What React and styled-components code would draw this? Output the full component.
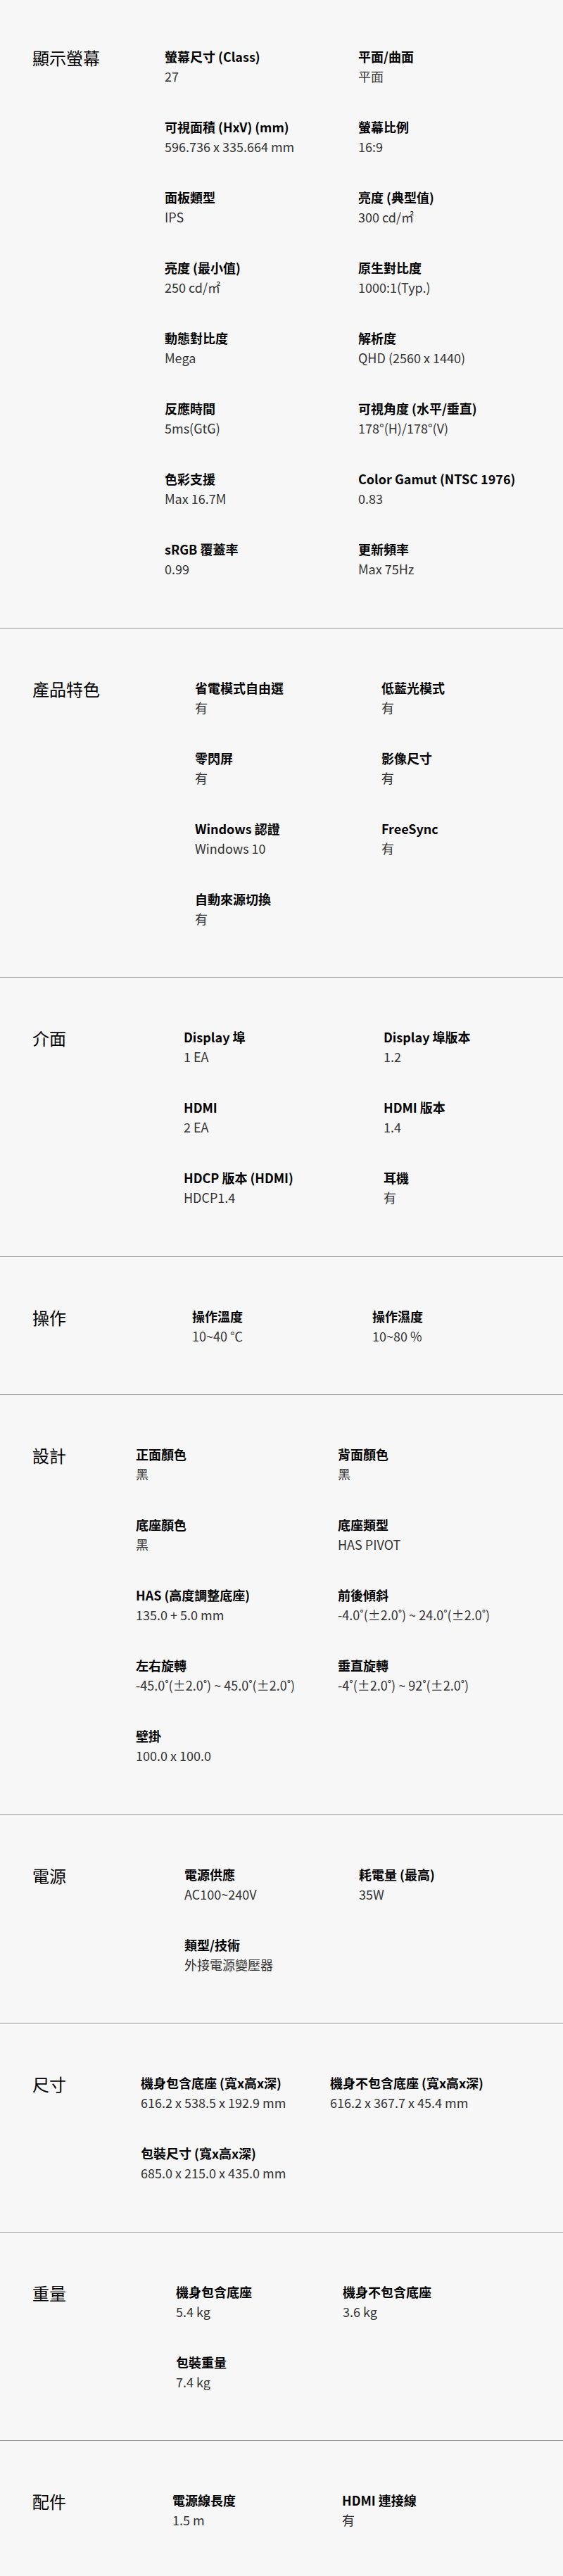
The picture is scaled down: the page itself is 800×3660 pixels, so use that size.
import React from "react";
import styled, { createGlobalStyle } from "styled-components";

const GlobalStyle = createGlobalStyle`
  html, body {
    margin: 0;
    padding: 0;
    background: #f7f7f7;
  }
  body {
    font-family: "Noto Sans CJK TC", "Noto Sans", sans-serif;
    color: #000;
  }
`;

const Page = styled.main`
  width: 800px;
  background: #f7f7f7;
`;

const Section = styled.section`
  display: grid;
  grid-template-columns: ${(p) => p.titleW}px 1fr;
  padding: ${(p) => (p.first ? 68 : 72)}px 0 71.5px 46px;
  border-top: ${(p) => (p.first ? "none" : "1px solid #959595")};
`;

const SectionTitle = styled.h2`
  margin: 0;
  font-size: 24px;
  line-height: 28px;
  font-weight: 400;
  color: #000;
`;

const ItemGrid = styled.dl`
  margin: 0;
  display: grid;
  grid-template-columns: ${(p) => p.colW}px 1fr;
  row-gap: 48px;
  align-content: start;
`;

const Item = styled.div`
  display: flex;
  flex-direction: column;
  gap: 4px;
`;

const Label = styled.dt`
  margin: 0;
  font-size: 18px;
  line-height: 24px;
  font-weight: 700;
  color: #000;
  white-space: nowrap;
`;

const Value = styled.dd`
  margin: 0;
  font-size: 18px;
  line-height: 24px;
  font-weight: 400;
  color: #333;
  white-space: nowrap;
`;

const specs = [
  {
    title: "顯示螢幕",
    titleW: 188,
    colW: 275,
    items: [
      ["螢幕尺寸 (Class)", "27"],
      ["平面/曲面", "平面"],
      ["可視面積 (HxV) (mm)", "596.736 x 335.664 mm"],
      ["螢幕比例", "16:9"],
      ["面板類型", "IPS"],
      ["亮度 (典型值)", "300 cd/㎡"],
      ["亮度 (最小值)", "250 cd/㎡"],
      ["原生對比度", "1000:1(Typ.)"],
      ["動態對比度", "Mega"],
      ["解析度", "QHD (2560 x 1440)"],
      ["反應時間", "5ms(GtG)"],
      ["可視角度 (水平/垂直)", "178°(H)/178°(V)"],
      ["色彩支援", "Max 16.7M"],
      ["Color Gamut (NTSC 1976)", "0.83"],
      ["sRGB 覆蓋率", "0.99"],
      ["更新頻率", "Max 75Hz"],
    ],
  },
  {
    title: "產品特色",
    titleW: 231,
    colW: 265,
    items: [
      ["省電模式自由選", "有"],
      ["低藍光模式", "有"],
      ["零閃屏", "有"],
      ["影像尺寸", "有"],
      ["Windows 認證", "Windows 10"],
      ["FreeSync", "有"],
      ["自動來源切換", "有"],
    ],
  },
  {
    title: "介面",
    titleW: 215,
    colW: 284,
    items: [
      ["Display 埠", "1 EA"],
      ["Display 埠版本", "1.2"],
      ["HDMI", "2 EA"],
      ["HDMI 版本", "1.4"],
      ["HDCP 版本 (HDMI)", "HDCP1.4"],
      ["耳機", "有"],
    ],
  },
  {
    title: "操作",
    titleW: 227,
    colW: 256,
    items: [
      ["操作溫度", "10~40 ℃"],
      ["操作濕度", "10~80 %"],
    ],
  },
  {
    title: "設計",
    titleW: 147,
    colW: 287,
    items: [
      ["正面顏色", "黑"],
      ["背面顏色", "黑"],
      ["底座顏色", "黑"],
      ["底座類型", "HAS PIVOT"],
      ["HAS (高度調整底座)", "135.0 + 5.0 mm"],
      ["前後傾斜", "-4.0˚(±2.0˚) ~ 24.0˚(±2.0˚)"],
      ["左右旋轉", "-45.0˚(±2.0˚) ~ 45.0˚(±2.0˚)"],
      ["垂直旋轉", "-4˚(±2.0˚) ~ 92˚(±2.0˚)"],
      ["壁掛", "100.0 x 100.0"],
    ],
  },
  {
    title: "電源",
    titleW: 216,
    colW: 248,
    items: [
      ["電源供應", "AC100~240V"],
      ["耗電量 (最高)", "35W"],
      ["類型/技術", "外接電源變壓器"],
    ],
  },
  {
    title: "尺寸",
    titleW: 154,
    colW: 269,
    items: [
      ["機身包含底座 (寬x高x深)", "616.2 x 538.5 x 192.9 mm"],
      ["機身不包含底座 (寬x高x深)", "616.2 x 367.7 x 45.4 mm"],
      ["包裝尺寸 (寬x高x深)", "685.0 x 215.0 x 435.0 mm"],
    ],
  },
  {
    title: "重量",
    titleW: 204,
    colW: 237,
    items: [
      ["機身包含底座", "5.4 kg"],
      ["機身不包含底座", "3.6 kg"],
      ["包裝重量", "7.4 kg"],
    ],
  },
  {
    title: "配件",
    titleW: 199,
    colW: 241,
    items: [
      ["電源線長度", "1.5 m"],
      ["HDMI 連接線", "有"],
    ],
  },
];

const SpecSection = ({ spec, first }) => (
  <Section titleW={spec.titleW} first={first}>
    <SectionTitle>{spec.title}</SectionTitle>
    <ItemGrid colW={spec.colW}>
      {spec.items.map(([label, value]) => (
        <Item key={label}>
          <Label>{label}</Label>
          <Value>{value}</Value>
        </Item>
      ))}
    </ItemGrid>
  </Section>
);

const App = () => (
  <>
    <GlobalStyle />
    <Page>
      {specs.map((spec, i) => (
        <SpecSection key={spec.title} spec={spec} first={i === 0} />
      ))}
    </Page>
  </>
);

export default App;
